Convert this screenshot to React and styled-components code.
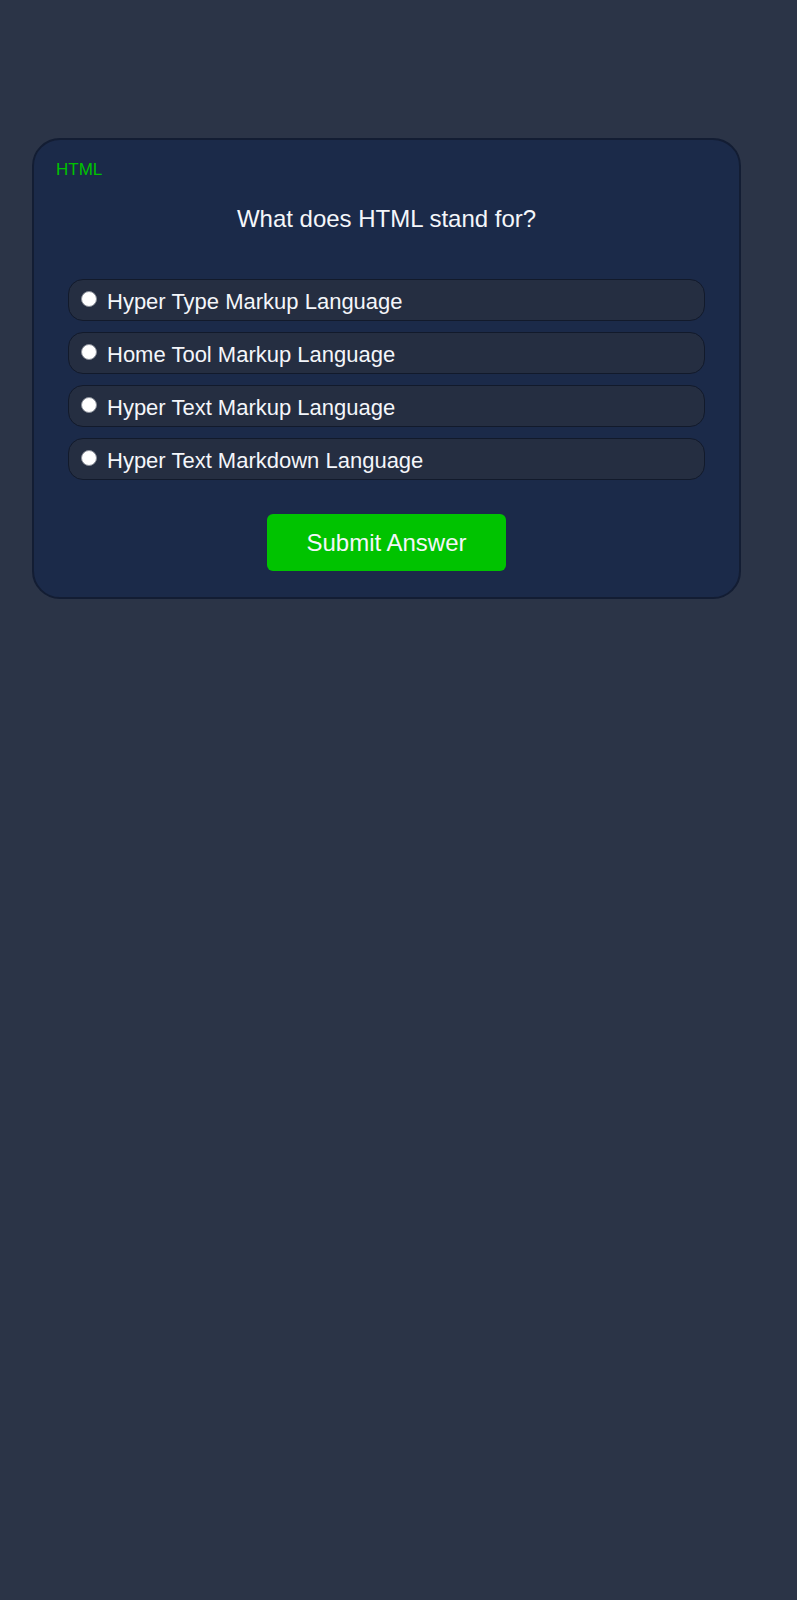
import React, { useState } from 'react'
import styled, { createGlobalStyle } from 'styled-components'

const colors = {
  page: '#2b3447',
  card: '#1b2a49',
  cardBorder: '#131d33',
  option: '#252e41',
  optionBorder: '#121a2b',
  green: '#00c300',
  text: '#f4f6fa',
}

const GlobalStyle = createGlobalStyle`
  html, body {
    margin: 0;
    background-color: ${colors.page};
    font-family: "Liberation Sans", Arial, sans-serif;
  }
  #root {
    min-height: 1600px;
  }
`

const Page = styled.div`
  padding: 138px 0 0 32px;
`

const Card = styled.div`
  box-sizing: border-box;
  width: 709px;
  background-color: ${colors.card};
  border: 2px solid ${colors.cardBorder};
  border-radius: 28px;
  padding: 20px 22px 26px;
`

const Category = styled.div`
  color: ${colors.green};
  font-size: 17px;
  line-height: 20px;
`

const Question = styled.h2`
  margin: 25px 0 46px;
  color: ${colors.text};
  font-size: 24px;
  line-height: 28px;
  font-weight: 500;
  text-align: center;
`

const Options = styled.div`
  display: flex;
  flex-direction: column;
  gap: 11px;
  padding: 0 12px;
`

const Option = styled.label`
  box-sizing: border-box;
  height: 42px;
  display: flex;
  align-items: center;
  gap: 10px;
  padding: 3px 12px 0;
  background-color: ${colors.option};
  border: 1px solid ${colors.optionBorder};
  border-radius: 15px;
  color: ${colors.text};
  font-size: 22px;
  cursor: pointer;
`

const Radio = styled.input`
  appearance: none;
  margin: -6px 0 0;
  width: 16px;
  height: 16px;
  border-radius: 50%;
  background: #fff;
  border: 1px solid #8a8f99;
  flex-shrink: 0;
  &:checked {
    border: 5px solid #1a73e8;
  }
`

const Footer = styled.div`
  display: flex;
  justify-content: center;
  margin-top: 34px;
`

const Button = styled.button`
  width: 239px;
  height: 57px;
  border: none;
  border-radius: 6px;
  background-color: ${colors.green};
  color: ${colors.text};
  font-family: inherit;
  font-size: 24px;
  cursor: pointer;
`

const answers = [
  'Hyper Type Markup Language',
  'Home Tool Markup Language',
  'Hyper Text Markup Language',
  'Hyper Text Markdown Language',
]

const App = () => {
  const [picked, setPicked] = useState(null)
  return <>
    <GlobalStyle />
    <Page>
      <Card>
        <Category>HTML</Category>
        <Question>What does HTML stand for?</Question>
        <Options>
          {answers.map((a, i) => (
            <Option key={a}>
              <Radio
                type="radio"
                name="answer"
                checked={picked === i}
                onChange={() => setPicked(i)}
              />
              {a}
            </Option>
          ))}
        </Options>
        <Footer>
          <Button>Submit Answer</Button>
        </Footer>
      </Card>
    </Page>
  </>
}

export default App
